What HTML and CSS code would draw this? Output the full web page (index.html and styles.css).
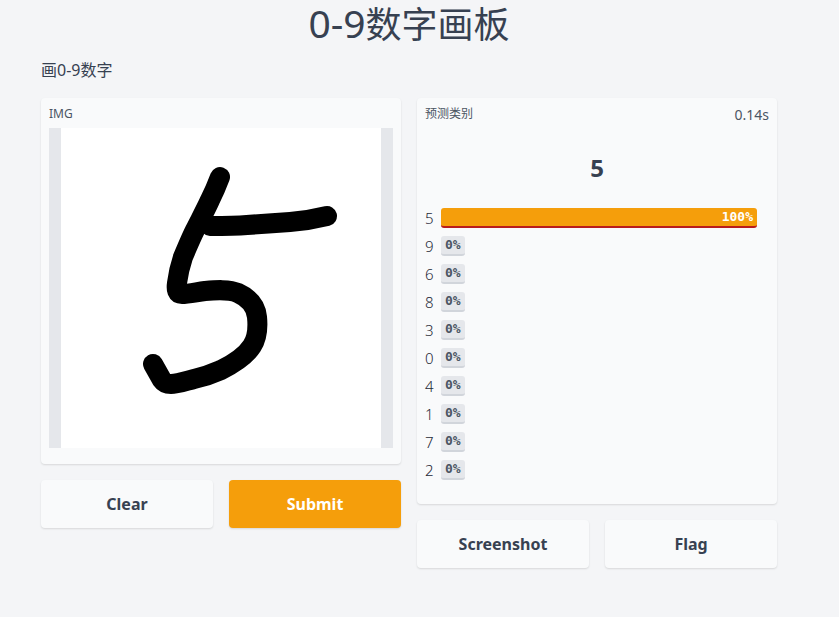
FILE: index.html
```html
<!DOCTYPE html>
<html lang="zh">
<head>
<meta charset="utf-8">
<title>0-9数字画板</title>
<link rel="stylesheet" href="styles.css">
</head>
<body>
<main class="app">
  <h1 class="title"><span class="title-num">0-9</span>数字画板</h1>
  <p class="desc">画0-9数字</p>
  <div class="columns">
    <section class="col">
      <div class="card input-card">
        <div class="label">IMG</div>
        <div class="canvas-wrap">
          <svg class="canvas" viewBox="0 0 320 320" width="320" height="320" aria-hidden="true">
            <path class="ink" d="M159 49C156 57 153 64 149 72C144 83 139 92 134 102C129 112 126 120 122 129C119 138 117 147 116 155C115 162 116 166 121 166C127 166 136 164 144 163C155 162 168 161 177 165C188 170 195 178 196 189C197 199 197 209 191 218C184 229 172 236 160 242C151 246 142 249 133 251C125 253 116 256 110 256C105 256 103 255 101 252L92 236"/>
            <path class="ink" d="M149 98C161 98 174 98 186 97C200 96 215 95 229 94C242 93 254 91 266 88"/>
          </svg>
        </div>
      </div>
      <div class="buttons">
        <button class="btn">Clear</button>
        <button class="btn primary">Submit</button>
      </div>
    </section>
    <section class="col">
      <div class="card output-card">
        <div class="out-head">
          <span class="label">预测类别</span>
          <span class="time">0.14s</span>
        </div>
        <div class="result">5</div>
        <div class="rows">
          <div class="row"><span class="digit">5</span><span class="bar full">100%</span></div>
          <div class="row"><span class="digit">9</span><span class="bar">0%</span></div>
          <div class="row"><span class="digit">6</span><span class="bar">0%</span></div>
          <div class="row"><span class="digit">8</span><span class="bar">0%</span></div>
          <div class="row"><span class="digit">3</span><span class="bar">0%</span></div>
          <div class="row"><span class="digit">0</span><span class="bar">0%</span></div>
          <div class="row"><span class="digit">4</span><span class="bar">0%</span></div>
          <div class="row"><span class="digit">1</span><span class="bar">0%</span></div>
          <div class="row"><span class="digit">7</span><span class="bar">0%</span></div>
          <div class="row"><span class="digit">2</span><span class="bar">0%</span></div>
        </div>
      </div>
      <div class="buttons">
        <button class="btn">Screenshot</button>
        <button class="btn">Flag</button>
      </div>
    </section>
  </div>
</main>
</body>
</html>
```
FILE: styles.css
```css
* { box-sizing: border-box; }
html, body { margin: 0; height: 100%; }
body {
  background: #f4f5f7;
  color: #374151;
  font-family: "Noto Sans", "Noto Sans CJK SC", sans-serif;
  overflow: hidden;
}
.app { width: 736px; margin-left: 41px; }
.title {
  margin: 0;
  height: 46px;
  font-size: 36px;
  line-height: 46px;
  font-weight: 400;
  text-align: center;
  white-space: nowrap;
}
.title-num { font-size: 39px; }
.desc {
  margin: 0;
  padding-top: 14px;
  height: 52px;
  font-size: 16px;
  line-height: 20px;
}
.columns { display: flex; gap: 16px; align-items: flex-start; }
.col { width: 360px; display: flex; flex-direction: column; gap: 16px; }
.card {
  background: #f9fafb;
  border-radius: 4px;
  box-shadow: 0 1px 2px rgba(0, 0, 0, 0.12);
}
.input-card { height: 366px; padding: 8px 8px 16px; }
.label { font-size: 12px; line-height: 16px; color: #4b5563; display: block; }
.canvas-wrap {
  margin-top: 6px;
  height: 320px;
  background: #e5e7eb;
  display: flex;
  justify-content: center;
}
.canvas { display: block; background: #fff; }
.ink {
  fill: none;
  stroke: #000;
  stroke-width: 20;
  stroke-linecap: round;
  stroke-linejoin: round;
}
.buttons { display: flex; gap: 16px; }
.btn {
  flex: 1;
  height: 48px;
  border: 0;
  border-radius: 4px;
  background: #f9fafb;
  color: #374151;
  font-family: inherit;
  font-size: 16px;
  font-weight: 700;
  box-shadow: 0 1px 2px rgba(0, 0, 0, 0.12);
}
.btn.primary { background: #f59e0b; color: #fff; }
.output-card { height: 406px; padding: 8px 8px 0; }
.out-head { display: flex; justify-content: space-between; align-items: flex-start; height: 20px; }
.time { font-size: 14px; line-height: 18px; color: #4b5563; }
.result {
  margin-top: 21px;
  height: 42px;
  font-size: 24px;
  line-height: 42px;
  font-weight: 700;
  text-align: center;
}
.rows { margin-top: 19px; display: flex; flex-direction: column; gap: 8px; }
.row { display: flex; align-items: center; gap: 8px; height: 20px; }
.digit { width: 8px; font-size: 15px; font-weight: 300; line-height: 18px; color: #1f2937; }
.bar {
  height: 20px;
  padding: 0 4px;
  border-radius: 3px;
  background: #e5e7eb;
  border-bottom: 2px solid #d1d5db;
  font-family: "DejaVu Sans Mono", monospace;
  font-size: 13px;
  font-weight: 700;
  line-height: 18px;
  color: #4b5563;
}
.bar.full {
  width: 316px;
  background: #f59e0b;
  border-bottom-color: #b91c1c;
  color: #fff;
  text-align: right;
}
```
